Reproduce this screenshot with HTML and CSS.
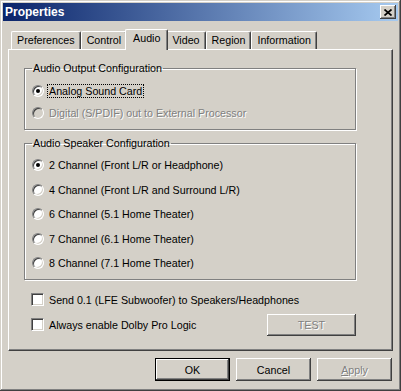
FILE: index.html
```html
<!DOCTYPE html>
<html lang="en">
<head>
  <meta charset="UTF-8">
  <title>Properties</title>
  <link rel="stylesheet" href="styles.css">
</head>
<body>
  <div class="window">
    <div class="titlebar">
      <span class="title">Properties</span>
      <button class="close">
        <svg width="8" height="7" viewBox="0 0 8 7"><path d="M0.5 0.5 L7.5 6.5 M7.5 0.5 L0.5 6.5" stroke="#000" stroke-width="1.7" fill="none"/></svg>
      </button>
    </div>

    <div class="content">
      <div class="tabs">
        <div class="tab">Preferences</div>
        <div class="tab">Control</div>
        <div class="tab active">Audio</div>
        <div class="tab">Video</div>
        <div class="tab">Region</div>
        <div class="tab">Information</div>
      </div>

      <div class="panel">
        <fieldset class="group first">
          <legend>Audio Output Configuration</legend>
          <div class="option"><span class="radio checked"></span><span class="focus">Analog Sound Card</span></div>
          <div class="option disabled"><span class="radio"></span><span>Digital (S/PDIF) out to External Processor</span></div>
        </fieldset>

        <fieldset class="group second">
          <legend>Audio Speaker Configuration</legend>
          <div class="option"><span class="radio checked"></span><span>2 Channel (Front L/R or Headphone)</span></div>
          <div class="option"><span class="radio"></span><span>4 Channel (Front L/R and Surround L/R)</span></div>
          <div class="option"><span class="radio"></span><span>6 Channel (5.1 Home Theater)</span></div>
          <div class="option"><span class="radio"></span><span>7 Channel (6.1 Home Theater)</span></div>
          <div class="option"><span class="radio"></span><span>8 Channel (7.1 Home Theater)</span></div>
        </fieldset>

        <div class="checks">
          <div class="check-row">
            <label class="check"><span class="box"></span>Send 0.1 (LFE Subwoofer) to Speakers/Headphones</label>
          </div>
          <div class="check-row">
            <label class="check"><span class="box"></span>Always enable Dolby Pro Logic</label>
            <button class="btn test" disabled>TEST</button>
          </div>
        </div>
      </div>

      <div class="actions">
        <button class="btn default">OK</button>
        <button class="btn">Cancel</button>
        <button class="btn" disabled><u>A</u>pply</button>
      </div>
    </div>
  </div>
</body>
</html>
```

FILE: styles.css
```css
* {
  box-sizing: border-box;
  margin: 0;
  padding: 0;
}
body {
  font-family: 'Liberation Sans', Arial, sans-serif;
  font-size: 10.7px;
  color: #000;
  background-color: #d4d0c8;
}
.window {
  width: 401px;
  height: 391px;
  padding: 3px;
  display: flex;
  flex-direction: column;
  background-color: #d4d0c8;
  box-shadow: inset -1px -1px #404040, inset 1px 1px #d4d0c8, inset -2px -2px #808080, inset 2px 2px #fff;
}
.titlebar {
  height: 18px;
  display: flex;
  align-items: center;
  justify-content: space-between;
  padding: 0 2px;
  background: linear-gradient(to right, #0a246a, #a6caf0);
}
.title {
  color: white;
  font-weight: bold;
  font-size: 12px;
}
.close {
  width: 16px;
  height: 14px;
  border: none;
  background-color: #d4d0c8;
  display: flex;
  align-items: center;
  justify-content: center;
  box-shadow: inset -1px -1px #404040, inset 1px 1px #fff, inset -2px -2px #808080;
}
.content {
  flex: 1;
  display: flex;
  flex-direction: column;
  padding: 8px 5px 0 5px;
}
.tabs {
  height: 20px;
  display: flex;
  align-items: flex-end;
  padding-left: 3px;
}
.tab {
  height: 18px;
  padding: 2px 5px 0 5px;
  border: 1px solid;
  border-color: #fff #404040 transparent #fff;
  border-bottom: none;
  border-radius: 2px 2px 0 0;
  box-shadow: inset -1px 0 #808080;
  background-color: #d4d0c8;
}
.tab.active {
  height: 21px;
  margin: 0 -2px -1px -2px;
  padding: 2px 7px 0 7px;
  position: relative;
  z-index: 1;
}
.panel {
  height: 302px;
  padding: 11px 36px 0 15px;
  border: 1px solid;
  border-color: #fff #404040 #404040 #fff;
  box-shadow: inset -1px -1px #808080;
}
.group {
  border: 1px solid #808080;
  box-shadow: inset 1px 1px #fff, 1px 1px #fff;
  padding: 5px 0 5px 7px;
}
.group legend {
  line-height: 14px;
  padding: 0 1px;
}
.group.second {
  margin-top: 6px;
  padding: 3px 0 3.5px 7px;
}
.option {
  height: 22px;
  display: flex;
  align-items: center;
  gap: 5px;
}
.second .option {
  height: 24.5px;
}
.option.disabled {
  color: #808080;
  text-shadow: 1px 1px #fff;
}
.radio {
  width: 12px;
  height: 12px;
  border-radius: 50%;
  border: 1px solid;
  border-color: #808080 #fff #fff #808080;
  box-shadow: inset 1px 1px #404040, inset -1px -1px #d4d0c8;
  background-color: white;
  display: flex;
  align-items: center;
  justify-content: center;
}
.radio.checked::after {
  content: "";
  width: 4px;
  height: 4px;
  border-radius: 50%;
  background-color: black;
}
.disabled .radio {
  background-color: #d4d0c8;
}
.focus {
  border: 1px dotted #000;
  padding: 0 1px;
  margin-left: -2px;
}
.checks {
  margin-top: 7px;
  padding-left: 7px;
}
.check-row {
  height: 25px;
  display: flex;
  align-items: center;
  justify-content: space-between;
}
.check-row:first-child {
  margin-top: 1px;
}
.check {
  display: flex;
  align-items: center;
  gap: 5px;
}
.box {
  width: 13px;
  height: 13px;
  border: 1px solid;
  border-color: #808080 #fff #fff #808080;
  box-shadow: inset 1px 1px #404040, inset -1px -1px #d4d0c8;
  background-color: white;
}
.btn {
  width: 75px;
  height: 23px;
  border: none;
  font-family: 'Liberation Sans', Arial, sans-serif;
  font-size: 10.7px;
  color: black;
  background-color: #d4d0c8;
  box-shadow: inset -1px -1px #404040, inset 1px 1px #fff, inset -2px -2px #808080;
}
.btn:disabled {
  color: #808080;
  text-shadow: 1px 1px #fff;
}
.btn.test {
  width: 89px;
  height: 22px;
  margin-top: 1px;
}
.btn.default {
  border: 1px solid #000;
}
.actions {
  display: flex;
  justify-content: flex-end;
  gap: 6px;
  margin-top: 7px;
  padding-right: 1px;
}
```
